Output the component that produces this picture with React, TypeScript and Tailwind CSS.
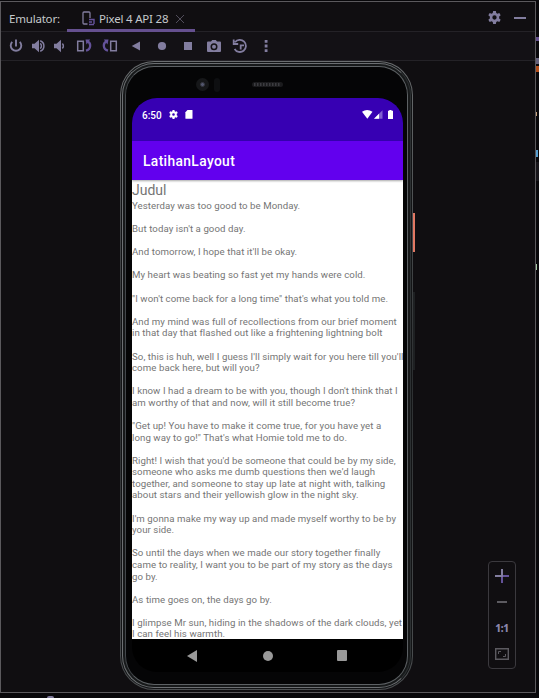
import React from "react";

const G = "#827d9f";
const P = "#64529a";

const verses: string[][] = [
  ["Yesterday was too good to be Monday."],
  ["But today isn't a good day."],
  ["And tomorrow, I hope that it'll be okay."],
  ["My heart was beating so fast yet my hands were cold."],
  ["\"I won't come back for a long time\" that's what you told me."],
  [
    "And my mind was full of recollections from our brief moment",
    "in that day that flashed out like a frightening lightning bolt",
  ],
  [
    "So, this is huh, well I guess I'll simply wait for you here till you'll",
    "come back here, but will you?",
  ],
  [
    "I know I had a dream to be with you, though I don't think that I",
    "am worthy of that and now, will it still become true?",
  ],
  [
    "\"Get up! You have to make it come true, for you have yet a",
    "long way to go!\" That's what Homie told me to do.",
  ],
  [
    "Right! I wish that you'd be someone that could be by my side,",
    "someone who asks me dumb questions then we'd laugh",
    "together, and someone to stay up late at night with, talking",
    "about stars and their yellowish glow in the night sky.",
  ],
  ["I'm gonna make my way up and made myself worthy to be by", "your side."],
  [
    "So until the days when we made our story together finally",
    "came to reality, I want you to be part of my story as the days",
    "go by.",
  ],
  ["As time goes on, the days go by."],
  [
    "I glimpse Mr sun, hiding in the shadows of the dark clouds, yet",
    "I can feel his warmth.",
  ],
];

function Gear({ size, color, hole }: { size: number; color: string; hole: number }) {
  return (
    <svg width={size} height={size} viewBox="0 0 24 24" className="block shrink-0">
      <path
        fill={color}
        fillRule="evenodd"
        d={`M9.500 0h5l.7 3.600 2.200 1.300 3.500-1.300 2.500 4.400-2.800 2.300v3.400l2.800 2.300-2.500 4.400-3.500-1.300-2.200 1.300-.7 3.600h-5l-.7-3.600-2.200-1.300-3.500 1.300L.6 16l2.800-2.300v-3.400L.6 8l2.500-4.400 3.500 1.300 2.200-1.300zM${12 - hole} 12a${hole} ${hole} 0 1 0 ${hole * 2} 0a${hole} ${hole} 0 1 0 ${-hole * 2} 0z`}
      />
    </svg>
  );
}

function Toolbar() {
  return (
    <div className="flex h-[29px] shrink-0 items-center border-b border-[#242227] bg-[#131115] pl-[6px]">
      <svg width="18" height="18" viewBox="0 0 18 18" fill="none" stroke={G} strokeWidth="1.900">
        <path d="M5.200 4.800a5.300 5.300 0 1 0 7.600 0M9 2.500V9.500" />
      </svg>
      <svg width="18" height="18" viewBox="0 0 18 18" className="ml-[4px]">
        <path fill={G} d="M3 6.800h2.500L10 2.800v12.400L5.500 11.200H3z" />
        <path fill="none" stroke={G} strokeWidth="1.500" d="M11.200 6.400a3.300 3.300 0 0 1 0 5.200M11.200 3.800a5.500 5.500 0 0 1 0 10.400" />
      </svg>
      <svg width="18" height="18" viewBox="0 0 18 18" className="ml-[4px]">
        <path fill={G} d="M3 6.800h2.500L10 2.800v12.400L5.500 11.200H3z" />
        <path fill="none" stroke={G} strokeWidth="1.500" d="M11.300 6.600a3.200 3.200 0 0 1 0 4.800" />
      </svg>
      <svg width="18" height="18" viewBox="0 0 18 18" className="ml-[6px]" fill="none">
        <path stroke={G} strokeWidth="1.500" d="M2.700 4.200h5.600v9.600H2.700z" />
        <path stroke={P} strokeWidth="2.300" d="M12.500 4.700c3.600 1 4 7.500-1.500 9" />
        <path fill={P} d="M10.500 2.500h4.700l-3.700 5z" />
      </svg>
      <svg width="18" height="18" viewBox="0 0 18 18" className="ml-[8px]" fill="none">
        <path stroke={G} strokeWidth="1.500" d="M9.700 4.200h5.600v9.600H9.700z" />
        <path stroke={P} strokeWidth="2.300" d="M5.500 4.700c-3.600 1-4 7.500 1.500 9" />
        <path fill={P} d="M7.500 2.500H2.800l3.700 5z" />
      </svg>
      <svg width="18" height="18" viewBox="0 0 18 18" className="ml-[8px]">
        <path fill={G} d="M4.700 9 13 4.500v9z" />
      </svg>
      <svg width="18" height="18" viewBox="0 0 18 18" className="ml-[8px]">
        <circle cx="9" cy="9" r="4.100" fill={G} />
      </svg>
      <svg width="18" height="18" viewBox="0 0 18 18" className="ml-[8px]">
        <path fill={G} d="M5 5h8v8H5z" />
      </svg>
      <svg width="18" height="18" viewBox="0 0 18 18" className="ml-[8px]">
        <path
          fill={G}
          fillRule="evenodd"
          d="M3 4.500h3L7.200 3h3.600L12 4.500h3q1 0 1 1V14q0 1-1 1H3q-1 0-1-1V5.500q0-1 1-1zM5.500 9.700a3.500 3.500 0 1 0 7 0a3.500 3.500 0 1 0-7 0z"
        />
        <circle cx="9" cy="9.700" r="2" fill={G} />
      </svg>
      <svg width="18" height="18" viewBox="0 0 18 18" className="ml-[8px]" fill="none" stroke={G} strokeWidth="1.800">
        <path d="M4 5.200A6.100 6.100 0 1 1 3.600 12M2.700 2.500V7h4.500M9.700 12.500V8.400h3.300" />
      </svg>
      <svg width="18" height="18" viewBox="0 0 18 18" className="ml-[8px]" fill={G}>
        <path d="M7.700 3h2.800v2.800H7.700zM7.700 7.600h2.800v2.800H7.700zM7.700 12.200h2.800V15H7.700z" />
      </svg>
    </div>
  );
}

function Phone() {
  return (
    <div className="relative h-[629px] w-[293px] shrink-0 rounded-[34px] bg-gradient-to-b from-[#6b6e70] via-[#2c2f31] to-[#4c4f51] p-px">
      <div className="h-full rounded-[33px] bg-[#131416] p-px">
        <div className="h-full rounded-[32px] border border-[#6c6f72] border-r-[#2c3032] bg-[#17191a] p-[2px]">
          <div className="flex h-full flex-col rounded-[29px] border border-[#5d6164] border-l-[#42464a] bg-[#050506] pl-[6px] pr-[4px]">
            <div className="flex h-[31px] shrink-0 items-center pl-[64px] pt-[4px]">
              <div className="flex size-[13px] items-center justify-center rounded-full bg-[#161719]">
                <div className="size-[5px] rounded-full border border-[#34363e] bg-[#53566e]" />
              </div>
              <div className="ml-[5px] h-[14px] w-[6px] rounded-full bg-[#0e0f11]" />
              <svg width="31" height="5" viewBox="0 0 31 5" className="ml-[32px]">
                <rect width="31" height="5" rx="2.500" fill="#1b1b1d" />
                <path d="M2 2.500h27" stroke="#3c3c40" strokeWidth="3" strokeDasharray="1.500 1.500" />
              </svg>
            </div>
            <div className="flex h-[574px] w-[271px] shrink-0 flex-col overflow-hidden rounded-[25px] bg-black font-['Roboto',sans-serif]">
              <div className="flex h-[43px] shrink-0 items-start bg-[#3700b3] pl-[10px] pt-[11px] text-white">
                <span className="w-[27px] text-[10px] font-medium leading-[13px]">6:50</span>
                <div className="pt-[1px]"><Gear size={9} color="#fff" hole={3.500} /></div>
                <svg width="8" height="9" viewBox="0 0 8 9" className="ml-[7px] mt-[1px]" fill="#fff">
                  <path d="M2.500 0H7q.5 0 .5.500v7.700q0 .6-.5.600H1q-.6 0-.6-.6V2.300z" />
                </svg>
                <svg width="32" height="10" viewBox="0 0 32 10" className="ml-auto mr-[9px] mt-px">
                  <path fill="#fff" d="M0 1.800q5-3.400 10.500 0L5.300 8.800z" />
                  <path fill="#8060d0" d="M20.500.3v8.500H12z" />
                  <path fill="#fff" d="M17 3.800v5h-5z" />
                  <path fill="#fff" d="M26 .8h1.300V0h2.200v.8H31v8.200h-5z" />
                </svg>
              </div>
              <div className="relative z-10 flex h-[39px] shrink-0 items-center bg-[#6200ee] pl-[11px] shadow-[0_1px_2px_rgba(0,0,0,0.35)]">
                <span className="text-[13.800px] font-medium leading-[18px] tracking-[0.370px] text-white">LatihanLayout</span>
              </div>
              <div className="h-[459px] shrink-0 overflow-hidden bg-white text-[#757575]">
                <div className="h-[20px] text-[14px] leading-[20px]">Judul</div>
                <div className="flex flex-col gap-[11.580px] whitespace-nowrap text-[9.660px] leading-[11.580px] tracking-[0.070px]">
                  {verses.map((verse, i) => (
                    <div key={i}>
                      {verse.map((line) => (
                        <div key={line}>{line}</div>
                      ))}
                    </div>
                  ))}
                </div>
              </div>
              <div className="flex h-[33px] items-center">
                <svg width="10" height="12" viewBox="0 0 10 12" className="ml-[55px]">
                  <path fill="#999" d="M0 6 10 0v12z" />
                </svg>
                <div className="ml-[66px] size-[10px] rounded-full bg-[#999]" />
                <div className="ml-[64px] h-[11px] w-[10px] rounded-[1px] bg-[#999]" />
              </div>
            </div>
          </div>
        </div>
      </div>
      <div className="absolute -right-[2px] top-[152px] h-[39px] w-[2px] bg-[#e27863]" />
      <div className="absolute -right-[2px] top-[231px] h-[78px] w-[2px] bg-[#1e2022]" />
    </div>
  );
}

export default function App() {
  return (
    <div className="relative flex h-[698px] w-[539px] flex-col overflow-hidden bg-[#08070a] pt-px">
      <div className="flex h-[692px] w-[536px] shrink-0 flex-col border border-[#5b595d] bg-[#100e11]">
        <div className="flex h-[30px] shrink-0 border-b border-[#242227] font-['Noto_Sans',sans-serif] text-[12px] text-[#c5c9cb]">
          <span className="w-[66px] pl-[8px] pt-[8px] text-[11.500px] leading-[18px] tracking-[-0.200px]">Emulator:</span>
          <div className="flex h-[30px] w-[128px] items-center border-b-[3px] border-[#65508f] pl-[15px] pt-[6px]">
            <svg width="14" height="15" viewBox="0 0 14 15" fill="none" className="shrink-0">
              <path d="M5.500 13H2q-1 0-1-1V2q0-1 1-1h5q1 0 1 1v5" stroke={G} strokeWidth="1.300" />
              <path d="M7 8.500h5v4.500M7 11h3M7 13.500h5" stroke={P} strokeWidth="1.400" />
            </svg>
            <span className="ml-[3px] w-[70px] whitespace-nowrap text-[11.500px] leading-[18px] tracking-[-0.200px]">Pixel 4 API 28</span>
            <svg width="8" height="8" viewBox="0 0 8 8" className="ml-[7px] shrink-0" stroke="#514d5b" strokeWidth="1"><path d="m0 0 8 8M8 0 0 8" /></svg>
          </div>
          <div className="ml-auto mr-[9px] flex items-center pt-[2px]">
            <Gear size={13} color={G} hole={4} />
            <div className="ml-[13px] h-[2px] w-[12px] bg-[#827d9f]" />
          </div>
        </div>
        <Toolbar />
        <div className="relative flex min-h-0 flex-1 pl-[119px]">
          <Phone />
          <div className="absolute right-[19px] top-[500px] flex h-[108px] w-[28px] flex-col items-center rounded-[4px] border border-[#3b393e] pt-[7px]">
            <svg width="14" height="14" viewBox="0 0 14 14">
              <path d="M0 6h6V0h2v8H0z" fill={G} />
              <path d="M6 14V8h2V6h6v2H8v6z" fill={P} />
            </svg>
            <div className="mt-[18px] h-[2px] w-[10px] bg-[#5c5a60]" />
            <span className="mt-[19px] font-['Noto_Sans',sans-serif] text-[10px] font-extrabold leading-[12px] tracking-[-0.300px] text-[#8c86ad]">1:1</span>
            <svg width="14" height="12" viewBox="0 0 14 12" className="mt-[14px]" fill="none" stroke="#5c5a60"><path d="M.7.700h12.600v10.600H.700z" strokeWidth="1.400" /><path d="M3.500 6V3.500H6M8 8.500h2.500V6" /></svg>
          </div>
        </div>
      </div>
      <div className="absolute left-[47px] top-[696px] h-[2px] w-[7px] rounded-t bg-[#827d9f]" />
      <div className="absolute left-[536px] top-[37px] h-[4px] w-[3px] bg-[#65508f]" />
      <div className="absolute left-[536px] top-[58px] h-[6px] w-[3px] bg-[#65617b]" />
      <div className="absolute left-[536px] top-[66px] h-[6px] w-[3px] bg-[#b34e1b]" />
      <div className="absolute left-[536px] top-[112px] h-[4px] w-px bg-[#c4a07b]" />
      <div className="absolute left-[536px] top-[150px] h-[7px] w-[2px] bg-[#589fd0]" />
      <div className="absolute left-[536px] top-[162px] h-[19px] w-[3px] bg-[#17151a]" />
      <div className="absolute left-[536px] top-[264px] h-[6px] w-px bg-[#a6c9a3]" />
    </div>
  );
}
